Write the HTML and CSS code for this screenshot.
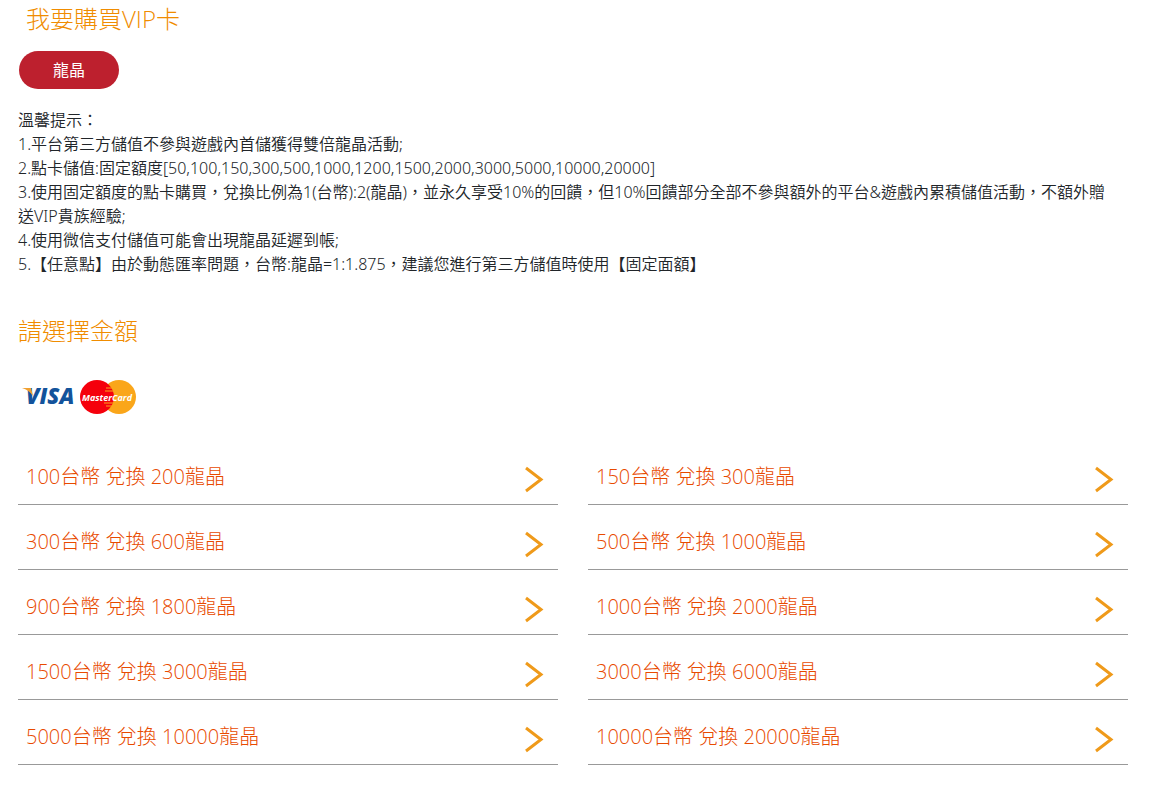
FILE: index.html
```
<!DOCTYPE html>
<html lang="zh-Hant">
<head>
    <meta charset="UTF-8">
    <meta name="viewport" content="width=device-width, initial-scale=1.0">
    <title>我要購買VIP卡</title>
    <link rel="stylesheet" href="styles.css">
</head>
<body>

    <svg class="symbols" aria-hidden="true">
        <symbol id="arrow" viewBox="0 0 20 30">
            <path d="M2 4 L17 15.500 L2 27" fill="none" stroke="#ef9a1a" stroke-width="3"/>
        </symbol>
    </svg>

    <main class="container">
        <h1 class="title">我要購買VIP卡</h1>
        <button type="button" class="tab-btn">龍晶</button>

        <p class="tips">
            溫馨提示：<br>
            1.平台第三方儲值不參與遊戲內首儲獲得雙倍龍晶活動;<br>
            2.點卡儲值:固定額度[50,100,150,300,500,1000,1200,1500,2000,3000,5000,10000,20000]<br>
            3.使用固定額度的點卡購買，兌換比例為1(台幣):2(龍晶)，並永久享受10%的回饋，但10%回饋部分全部不參與額外的平台&amp;遊戲內累積儲值活動，不額外贈送VIP貴族經驗;<br>
            4.使用微信支付儲值可能會出現龍晶延遲到帳;<br>
            5.【任意點】由於動態匯率問題，台幣:龍晶=1:1.875，建議您進行第三方儲值時使用【固定面額】
        </p>

        <h2 class="subtitle">請選擇金額</h2>

        <svg class="cards" viewBox="0 0 120 40" role="img" aria-label="VISA MasterCard">
            <text class="visa" x="8" y="27">VISA</text>
            <path d="M4 11 H13 L15 19 Q11 13 4 11 Z" fill="#f0a030"/>
            <circle cx="101" cy="20" r="17" fill="#faa61a"/>
            <circle cx="79" cy="20" r="17" fill="#f5000c"/>
            <path d="M88 11 H95 M87 14 H95 M86 26 H95 M88 29 H94" stroke="#faa61a" stroke-width="1"/>
            <text class="master" x="64" y="24">MasterCard</text>
        </svg>

        <div class="amounts">
            <a class="amount" href="#"><span>100台幣 兌換 200龍晶</span><svg class="arrow"><use href="#arrow"/></svg></a>
            <a class="amount" href="#"><span>150台幣 兌換 300龍晶</span><svg class="arrow"><use href="#arrow"/></svg></a>
            <a class="amount" href="#"><span>300台幣 兌換 600龍晶</span><svg class="arrow"><use href="#arrow"/></svg></a>
            <a class="amount" href="#"><span>500台幣 兌換 1000龍晶</span><svg class="arrow"><use href="#arrow"/></svg></a>
            <a class="amount" href="#"><span>900台幣 兌換 1800龍晶</span><svg class="arrow"><use href="#arrow"/></svg></a>
            <a class="amount" href="#"><span>1000台幣 兌換 2000龍晶</span><svg class="arrow"><use href="#arrow"/></svg></a>
            <a class="amount" href="#"><span>1500台幣 兌換 3000龍晶</span><svg class="arrow"><use href="#arrow"/></svg></a>
            <a class="amount" href="#"><span>3000台幣 兌換 6000龍晶</span><svg class="arrow"><use href="#arrow"/></svg></a>
            <a class="amount" href="#"><span>5000台幣 兌換 10000龍晶</span><svg class="arrow"><use href="#arrow"/></svg></a>
            <a class="amount" href="#"><span>10000台幣 兌換 20000龍晶</span><svg class="arrow"><use href="#arrow"/></svg></a>
        </div>
    </main>

</body>
</html>
```

FILE: styles.css
```
* {
    margin: 0;
    padding: 0;
    box-sizing: border-box;
}

body {
    font-family: "Open Sans", "Noto Sans CJK TC", sans-serif;
    font-weight: 300;
    font-size: 16px;
    line-height: 24px;
    color: #212529;
    background: #ffffff;
}

.symbols {
    display: none;
}

.container {
    padding: 4px 26px 20px 18px;
}

.title,
.subtitle {
    font-size: 24px;
    font-weight: 300;
    line-height: 30px;
    color: #f08c00;
}

.title {
    padding-left: 8px;
    margin-bottom: 17px;
}

.tab-btn {
    display: block;
    width: 100px;
    height: 38px;
    padding-bottom: 2px;
    margin-left: 1px;
    margin-bottom: 19px;
    border: none;
    border-radius: 19px;
    background: #bd202e;
    color: #ffffff;
    font-family: inherit;
    font-size: 16px;
    cursor: pointer;
}

.tips {
    padding-right: 12px;
    margin-bottom: 40px;
    font-family: "Noto Sans", "Noto Sans CJK TC", sans-serif;
    font-weight: 350;
}

.cards {
    display: block;
    width: 120px;
    height: 40px;
    margin: 31px 0 23px;
}

.visa {
    font-family: "Open Sans", sans-serif;
    font-size: 22px;
    font-weight: 800;
    font-style: italic;
    fill: #13539b;
}

.master {
    font-family: "Open Sans", sans-serif;
    font-size: 9px;
    font-weight: 700;
    font-style: italic;
    fill: #ffffff;
}

.amounts {
    display: grid;
    grid-template-columns: 1fr 1fr;
    column-gap: 30px;
}

.amount {
    display: flex;
    justify-content: space-between;
    align-items: center;
    padding: 24px 14px 10px 8px;
    border-bottom: 1px solid #999999;
    color: #e84a00;
    font-size: 20px;
    text-decoration: none;
}

.amount span {
    padding-bottom: 4px;
}

.arrow {
    width: 20px;
    height: 30px;
}

.amount:hover {
    background: #fff8ee;
}
```
